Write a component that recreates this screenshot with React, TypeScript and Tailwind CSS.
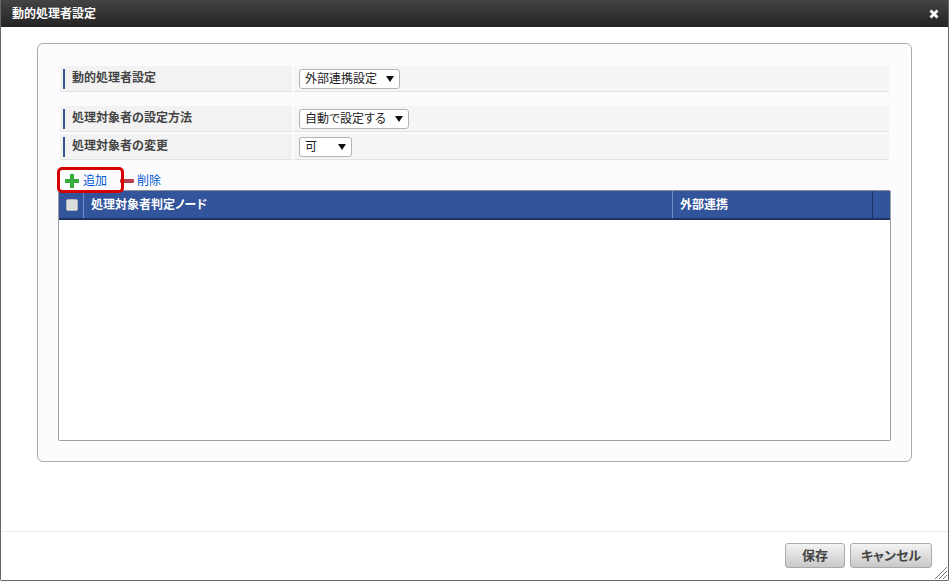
const jp = { fontFamily: '"Liberation Sans", "Noto Sans CJK JP", sans-serif' };

function Row({ label, value, selectWidth, className }: { label: string; value: string; selectWidth: string; className: string }) {
  return (
    <div className={`flex h-[26px] gap-[2px] ${className}`}>
      <div className="flex w-[232px] items-center border-b border-[#e2e2e2] bg-[#f2f2f2] pl-[3px]">
        <div className="flex h-[20px] items-center border-l-[2px] border-[#34548f] pb-[1px] pl-[7px] text-[12px] font-bold text-[#444]">{label}</div>
      </div>
      <div className="flex flex-1 items-center border-b border-[#e2e2e2] bg-[#f5f5f5] pl-[5px]">
        <div className={`flex h-[20px] items-center justify-between rounded-[3px] border border-[#b4b4b4] bg-white pl-[5px] pr-[5px] text-[12px] text-[#222] [font-feature-settings:"palt"] ${selectWidth}`}>
          <span>{value}</span>
          <svg width="8" height="6" viewBox="0 0 8 6"><path d="M0 0h8L4 6z" fill="#111" /></svg>
        </div>
      </div>
    </div>
  );
}

export default function App() {
  return (
    <div style={jp} className="flex h-[581px] w-[949px] flex-col overflow-hidden rounded-b-[2px] border-x border-b border-[#666] bg-white">
      {/* タイトルバー */}
      <div className="flex h-[27px] shrink-0 items-center justify-between bg-gradient-to-b from-[#444] to-[#242424] pl-[11px] pr-[9px]">
        <span className="text-[12px] font-bold text-white">動的処理者設定</span>
        <svg width="10" height="10" viewBox="0 0 10 10">
          <path d="M1.5 1.5l7 7M8.5 1.5l-7 7" stroke="#fff" strokeWidth="2.8" />
        </svg>
      </div>

      <div className="flex-1 px-[36px] pt-[16px]">
        <div className="h-[419px] w-[875px] rounded-[6px] border border-[#aaa] bg-[#fcfcfe] pl-[22px] pr-[22px] pt-[22px]">
          <Row label="動的処理者設定" value="外部連携設定" selectWidth="w-[101px]" className="" />
          <Row label="処理対象者の設定方法" value="自動で設定する" selectWidth="w-[110px]" className="mt-[14px]" />
          <Row label="処理対象者の変更" value="可" selectWidth="w-[53px]" className="mt-[2px]" />

          {/* ツールバー */}
          <div className="relative -ml-[2px] flex h-[30px] items-end text-[12px] text-[#0058d0]">
            <div className="absolute left-[62px] top-[19px] h-[4px] w-[14px] rounded-[1px] bg-[#b8404a]" />
            <div className="absolute left-[-1px] top-[7px] z-10 h-[26px] w-[67px] rounded-[5px] border-[3px] border-[#d40000]" />
            <div className="flex h-[18px] w-[79px] items-center pl-[7px]">
              <svg width="14" height="14" viewBox="0 0 14 14" className="mr-[4px]">
                <path d="M5 0h4v5h5v4H9v5H5V9H0V5h5z" fill="#36ae3c" />
              </svg>
              追加
            </div>
            <div className="flex h-[18px] items-center">削除</div>
          </div>

          {/* テーブル */}
          <div className="-ml-[2px] -mr-[2px] h-[251px] rounded-[2px] border border-[#a0a0a0] border-t-[#909090] bg-white">
            <div className="flex h-[29px] border-b-[2px] border-[#1f3364] bg-[#32549a] text-[12px] font-bold text-white [font-feature-settings:'palt']">
              <div className="flex w-[25px] items-center justify-center border-r border-[#6f8cc4] pl-[1px]">
                <div className="h-[12px] w-[12px] rounded-[2px] border border-[#b8b8b8] bg-[#dedede]" />
              </div>
              <div className="flex w-[589px] items-center border-r border-[#6f8cc4] pl-[7px]">処理対象者判定ノード</div>
              <div className="flex w-[200px] items-center border-r border-[#1f3364] pl-[7px]">外部連携</div>
            </div>
          </div>
        </div>
      </div>

      {/* フッター */}
      <div className="relative flex h-[49px] shrink-0 items-start justify-end gap-[5px] border-t border-[#ececec] pr-[16px] pt-[11px]">
        <button className="h-[25px] w-[60px] rounded-[3px] border border-[#aaa] bg-gradient-to-b from-[#f4f4f4] to-[#c8c8c8] text-[13px] font-bold text-[#444]">保存</button>
        <button className="h-[25px] w-[82px] rounded-[3px] border border-[#aaa] bg-gradient-to-b from-[#f4f4f4] to-[#c8c8c8] text-[13px] font-bold text-[#444] [font-feature-settings:'palt']">キャンセル</button>
        <svg width="12" height="12" viewBox="0 0 12 12" className="absolute bottom-[1px] right-[1px]">
          <path d="M0 12L12 0M4 12l8-8M8 12l4-4" stroke="#777" strokeWidth="1" />
        </svg>
      </div>
    </div>
  );
}
